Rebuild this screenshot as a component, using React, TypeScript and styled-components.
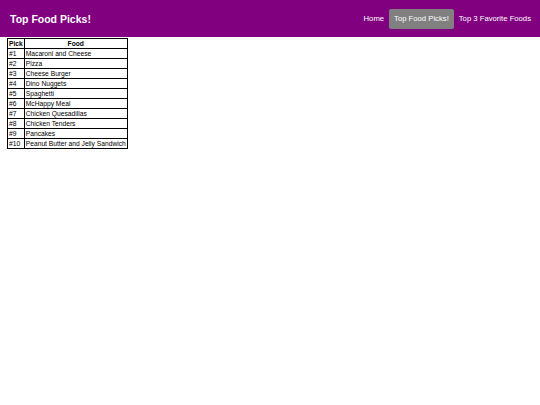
import styled, { createGlobalStyle } from 'styled-components'

const GlobalStyle = createGlobalStyle`
  body {
    margin: 0;
    font-family: 'Liberation Sans', Arial, sans-serif;
    background: #fff;
  }
`

const foods = [
  'Macaroni and Cheese',
  'Pizza',
  'Cheese Burger',
  'Dino Nuggets',
  'Spaghetti',
  'McHappy Meal',
  'Chicken Quesadillas',
  'Chicken Tenders',
  'Pancakes',
  'Peanut Butter and Jelly Sandwich',
]

const StyledNavbar = styled.nav`
  display: flex;
  align-items: center;
  justify-content: space-between;
  height: 37px;
  padding: 0 4px 0 10px;
  background: #800080;
`

const StyledBrand = styled.span`
  color: #fff;
  font-size: 10.5px;
  font-weight: bold;
  padding-top: 1px;
`

const StyledLinks = styled.div`
  display: flex;
  align-items: center;
`

const StyledLink = styled.a<{ $active?: boolean }>`
  color: #fff;
  font-size: 7.7px;
  line-height: 9px;
  text-decoration: none;
  padding: 5.5px 5px;
  border-radius: 2px;
  background: ${({ $active }) => ($active ? '#808080' : 'transparent')};
`

const StyledContent = styled.main`
  padding: 1px 7px;
`

const StyledTable = styled.table`
  border-collapse: collapse;
  font-size: 6.7px;
  color: #000;
`

const StyledTh = styled.th`
  border: 1px solid #000;
  padding: 0 1px;
  height: 9px;
  line-height: 8px;
`

const StyledTd = styled.td`
  border: 1px solid #000;
  padding: 0 1px;
  height: 9px;
  line-height: 8px;
`

export default function App() {
  return (
    <>
      <GlobalStyle />
      <StyledNavbar>
        <StyledBrand>Top Food Picks!</StyledBrand>
        <StyledLinks>
          <StyledLink href="#">Home</StyledLink>
          <StyledLink href="#" $active>Top Food Picks!</StyledLink>
          <StyledLink href="#">Top 3 Favorite Foods</StyledLink>
        </StyledLinks>
      </StyledNavbar>
      <StyledContent>
        <StyledTable>
          <thead>
            <tr>
              <StyledTh>Pick</StyledTh>
              <StyledTh>Food</StyledTh>
            </tr>
          </thead>
          <tbody>
            {foods.map((food, i) => (
              <tr key={food}>
                <StyledTd>#{i + 1}</StyledTd>
                <StyledTd>{food}</StyledTd>
              </tr>
            ))}
          </tbody>
        </StyledTable>
      </StyledContent>
    </>
  )
}
